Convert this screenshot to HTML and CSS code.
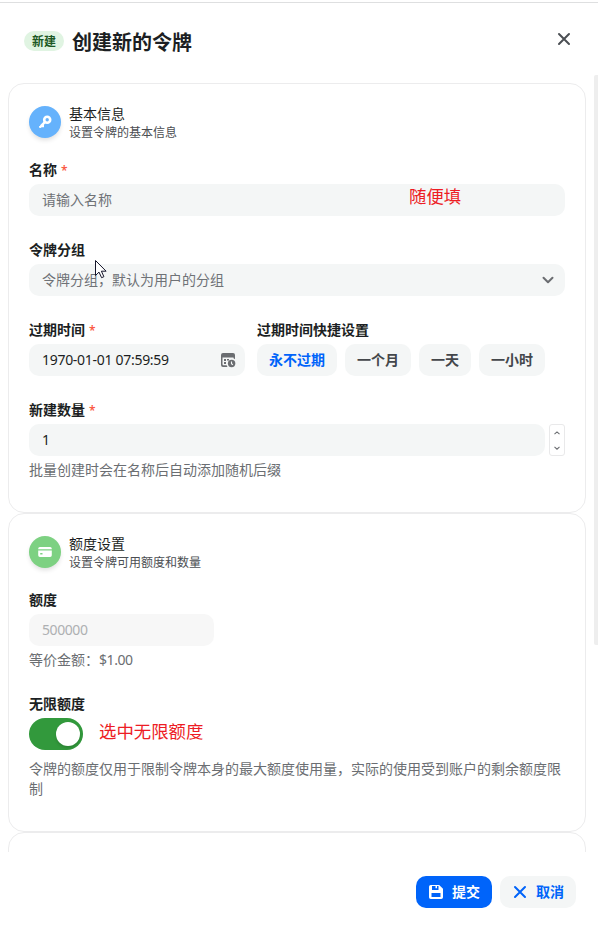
FILE: index.html
```html
<!DOCTYPE html>
<html lang="zh-CN">
<head>
    <meta charset="UTF-8">
    <meta name="viewport" content="width=device-width, initial-scale=1.0">
    <title>创建新的令牌</title>
    <link rel="stylesheet" href="styles.css">
</head>
<body>
    <div class="sheet">
        <header class="sheet-header">
            <span class="tag">新建</span>
            <h1>创建新的令牌</h1>
            <button class="close" aria-label="关闭">
                <svg width="14" height="14" viewBox="0 0 14 14"><path d="M2 2l10 10M12 2L2 12" stroke="#4b4f54" stroke-width="2" stroke-linecap="round"/></svg>
            </button>
        </header>

        <main class="sheet-body">
            <div class="scrollbar"></div>

            <section class="card">
                <div class="card-head">
                    <span class="avatar avatar-blue">
                        <svg width="16" height="16" viewBox="0 0 16 16"><circle cx="10.200" cy="5.800" r="3" fill="none" stroke="#fff" stroke-width="2.600"/><path d="M7.800 8.200L3.200 12.800M4.200 12h1.600v-1.500" fill="none" stroke="#fff" stroke-width="2.400" stroke-linecap="round"/></svg>
                    </span>
                    <div>
                        <div class="card-title">基本信息</div>
                        <div class="card-desc">设置令牌的基本信息</div>
                    </div>
                </div>

                <div class="field">
                    <label>名称<span class="required">*</span></label>
                    <div class="input">
                        <span class="placeholder">请输入名称</span>
                        <span class="note note-name">随便填</span>
                    </div>
                </div>

                <div class="field">
                    <label>令牌分组</label>
                    <div class="input">
                        <span class="placeholder">令牌分组，默认为用户的分组</span>
                        <svg class="arrow" width="16" height="16" viewBox="0 0 16 16"><path d="M3.500 5.800L8 10.300l4.500-4.500" fill="none" stroke="#6b6d71" stroke-width="2" stroke-linecap="round" stroke-linejoin="round"/></svg>
                        <svg class="cursor" width="13" height="21" viewBox="0 0 13 21"><path d="M1.500 1.500v15l3.500-3.400 2.600 5.600 2.300-1-2.500-5.500h4.700z" fill="#fff" stroke="#15152a" stroke-width="1"/></svg>
                    </div>
                </div>

                <div class="field-row">
                    <div class="field field-date">
                        <label>过期时间<span class="required">*</span></label>
                        <div class="input">
                            <span class="number date">1970-01-01 07:59:59</span>
                            <svg class="calendar" width="16" height="16" viewBox="0 0 16 16">
                                <path d="M3 1h10a2 2 0 0 1 2 2v4.200a5 5 0 0 0-1.500-.9V5.500h-11V12c0 .8.500 1.300 1.300 1.300h2.900c.2.600.5 1.200.9 1.700H3a2 2 0 0 1-2-2V3a2 2 0 0 1 2-2z" fill="#6b6d71"/>
                                <path d="M4 7h2v2H4zM7 7h2v1.500H7zM4 10h2v2H4z" fill="#6b6d71"/>
                                <circle cx="11.600" cy="11.500" r="3.700" fill="#6b6d71"/>
                                <path d="M11.500 9.500v2.200l1.400 1" fill="none" stroke="#f4f6f6" stroke-width="1.100"/>
                            </svg>
                        </div>
                    </div>
                    <div class="field">
                        <label>过期时间快捷设置</label>
                        <div class="quick">
                            <button class="btn btn-primary-text">永不过期</button>
                            <button class="btn">一个月</button>
                            <button class="btn">一天</button>
                            <button class="btn">一小时</button>
                        </div>
                    </div>
                </div>

                <div class="field">
                    <label>新建数量<span class="required">*</span></label>
                    <div class="input-number">
                        <div class="input"><span class="number">1</span></div>
                        <div class="stepper">
                            <svg width="8" height="8" viewBox="0 0 8 8"><path d="M1.500 5.200L4 2.900l2.500 2.300" fill="none" stroke="#6b6d71" stroke-width="1.100"/></svg>
                            <svg width="8" height="8" viewBox="0 0 8 8"><path d="M1.500 2.900L4 5.200l2.500-2.300" fill="none" stroke="#6b6d71" stroke-width="1.100"/></svg>
                        </div>
                    </div>
                    <div class="help">批量创建时会在名称后自动添加随机后缀</div>
                </div>
            </section>

            <section class="card">
                <div class="card-head">
                    <span class="avatar avatar-green">
                        <svg width="16" height="16" viewBox="0 0 16 16"><path d="M1.200 5.200V4.700a1.700 1.700 0 0 1 1.700-1.700h10.200a1.700 1.700 0 0 1 1.700 1.700v.5z" fill="#fff"/><path d="M1.200 6.500h13.600v4.800a1.700 1.700 0 0 1-1.700 1.700H2.900a1.700 1.700 0 0 1-1.700-1.700zM3.200 9v1.400h2.300V9z" fill="#fff" fill-rule="evenodd"/></svg>
                    </span>
                    <div>
                        <div class="card-title">额度设置</div>
                        <div class="card-desc">设置令牌可用额度和数量</div>
                    </div>
                </div>

                <div class="field">
                    <label>额度</label>
                    <div class="input input-disabled"><span class="number">500000</span></div>
                    <div class="help">等价金额：<span class="number">$1.00</span></div>
                </div>

                <div class="field">
                    <label>无限额度</label>
                    <div class="switch-row">
                        <div class="switch"></div>
                        <span class="note">选中无限额度</span>
                    </div>
                    <div class="help help-switch">令牌的额度仅用于限制令牌本身的最大额度使用量，实际的使用受到账户的剩余额度限制</div>
                </div>
            </section>

            <section class="card"></section>
        </main>

        <footer class="sheet-footer">
            <button class="btn btn-icon btn-solid">
                <svg width="16" height="16" viewBox="0 0 16 16"><path d="M2.800 1h8.400L15 4.800v8.400a1.800 1.800 0 0 1-1.800 1.800H2.800A1.800 1.800 0 0 1 1 13.200V2.800A1.800 1.800 0 0 1 2.800 1zM4 2V6h6.500V2H9v2.200H7.500V2zM3.500 9v4h9V9z" fill="#fff" fill-rule="evenodd"/></svg>
                提交
            </button>
            <button class="btn btn-icon btn-primary-text">
                <svg width="16" height="16" viewBox="0 0 16 16"><path d="M3 3l10 10M13 3L3 13" stroke="#0064fa" stroke-width="2" stroke-linecap="round"/></svg>
                取消
            </button>
        </footer>
    </div>
</body>
</html>
```

FILE: styles.css
```css
* {
    box-sizing: border-box;
}
body {
    margin: 0;
    font-family: "Noto Sans", "Noto Sans CJK SC", sans-serif;
    font-size: 14px;
    line-height: 20px;
    color: #1c1f23;
    background: #fff;
}
button {
    font: inherit;
    border: none;
    padding: 0;
}
svg {
    display: block;
    flex: none;
}
.sheet {
    height: 927px;
    padding-top: 2px;
    display: flex;
    flex-direction: column;
    overflow: hidden;
}
.sheet-header {
    height: 73px;
    flex: none;
    border-top: 1px solid #dedfe0;
    padding: 0 27px 0 24px;
    display: flex;
    align-items: center;
    gap: 8px;
}
.sheet-header h1 {
    margin: 7px 0 0;
    font-size: 20px;
    line-height: 28px;
    font-weight: 700;
}
.tag {
    margin-top: 4px;
    padding: 1px 8px 0;
    height: 20px;
    border-radius: 10px;
    background: #e0f4e2;
    color: #1b5924;
    font-size: 12px;
    font-weight: 600;
}
.close {
    margin-left: auto;
    background: none;
}
.sheet-body {
    position: relative;
    height: 777px;
    flex: none;
    padding: 8px 12px 0 8px;
    overflow: hidden;
}
.scrollbar {
    position: absolute;
    top: 0;
    right: -2px;
    width: 6px;
    height: 570px;
    border-radius: 2px;
    background: #eee;
}
.card {
    padding: 20px 20px 32px;
    border: 1px solid #ececed;
    border-radius: 16px;
}
.card-head {
    display: flex;
    align-items: center;
    gap: 8px;
    margin-bottom: 20px;
}
.card-desc {
    height: 16px;
    font-size: 12px;
    line-height: 18px;
    color: #4b4e52;
}
.avatar {
    width: 32px;
    height: 32px;
    border-radius: 50%;
    display: flex;
    align-items: center;
    justify-content: center;
    box-shadow: 0 3px 5px -1px rgba(0, 0, 0, 0.14);
}
.avatar-blue {
    background: #65b2fc;
}
.avatar-green {
    background: #7dd182;
}
.field + .field,
.field-row,
.field-row + .field {
    margin-top: 24px;
}
.field-row {
    display: flex;
    gap: 12px;
}
.field-row .field {
    margin-top: 0;
}
.field-date {
    width: 216px;
}
label {
    display: block;
    margin-bottom: 4px;
    font-weight: 700;
}
.required {
    margin-left: 4px;
    color: #fa5a45;
    font-size: 12px;
    line-height: 1;
    font-weight: 600;
}
.input {
    position: relative;
    height: 32px;
    padding: 0 9px 0 13px;
    border-radius: 10px;
    background: #f4f6f6;
    display: flex;
    align-items: center;
    justify-content: space-between;
}
.placeholder {
    color: #6f7276;
}
.number {
    letter-spacing: -0.42px;
}
.date {
    letter-spacing: -0.29px;
}
.input-disabled {
    width: 185px;
    background: #f7f7f7;
    color: #aeb0b2;
}
.input-number {
    display: flex;
    gap: 4px;
}
.input-number .input {
    flex: 1;
}
.stepper {
    width: 16px;
    height: 32px;
    padding: 4px 0 3px;
    border: 1px solid #e9e9ea;
    border-radius: 3px;
    display: flex;
    flex-direction: column;
    align-items: center;
    justify-content: space-between;
}
.help {
    margin-top: 4px;
    color: #6b6e72;
}
.help-switch {
    margin-top: 9px;
}
.quick {
    display: flex;
    gap: 8px;
}
.btn {
    height: 32px;
    padding: 0 12px;
    border-radius: 10px;
    background: #f4f6f6;
    color: #44474b;
    font-weight: 700;
}
.btn-primary-text {
    color: #0064fa;
}
.btn-icon {
    display: flex;
    align-items: center;
    gap: 8px;
}
.btn-solid {
    background: #0064fa;
    color: #fff;
}
.switch-row {
    display: flex;
    gap: 16px;
}
.switch {
    width: 54px;
    height: 32px;
    padding: 4px 3px;
    border-radius: 16px;
    background: #32993c;
    display: flex;
    justify-content: flex-end;
}
.switch::after {
    content: "";
    width: 24px;
    height: 24px;
    border-radius: 50%;
    background: #fff;
    box-shadow: 0 2px 3px rgba(0, 0, 0, 0.15);
}
/* red hints for the reader */
.note {
    color: #ed1c24;
    font-size: 17.4px;
    line-height: 26px;
}
.note-name {
    position: absolute;
    left: 380px;
    top: -1px;
}
.cursor {
    position: absolute;
    left: 65px;
    top: -5px;
}
.sheet-footer {
    flex: 1;
    padding: 24px 22px 0;
    display: flex;
    align-items: flex-start;
    justify-content: flex-end;
    gap: 8px;
}
```
